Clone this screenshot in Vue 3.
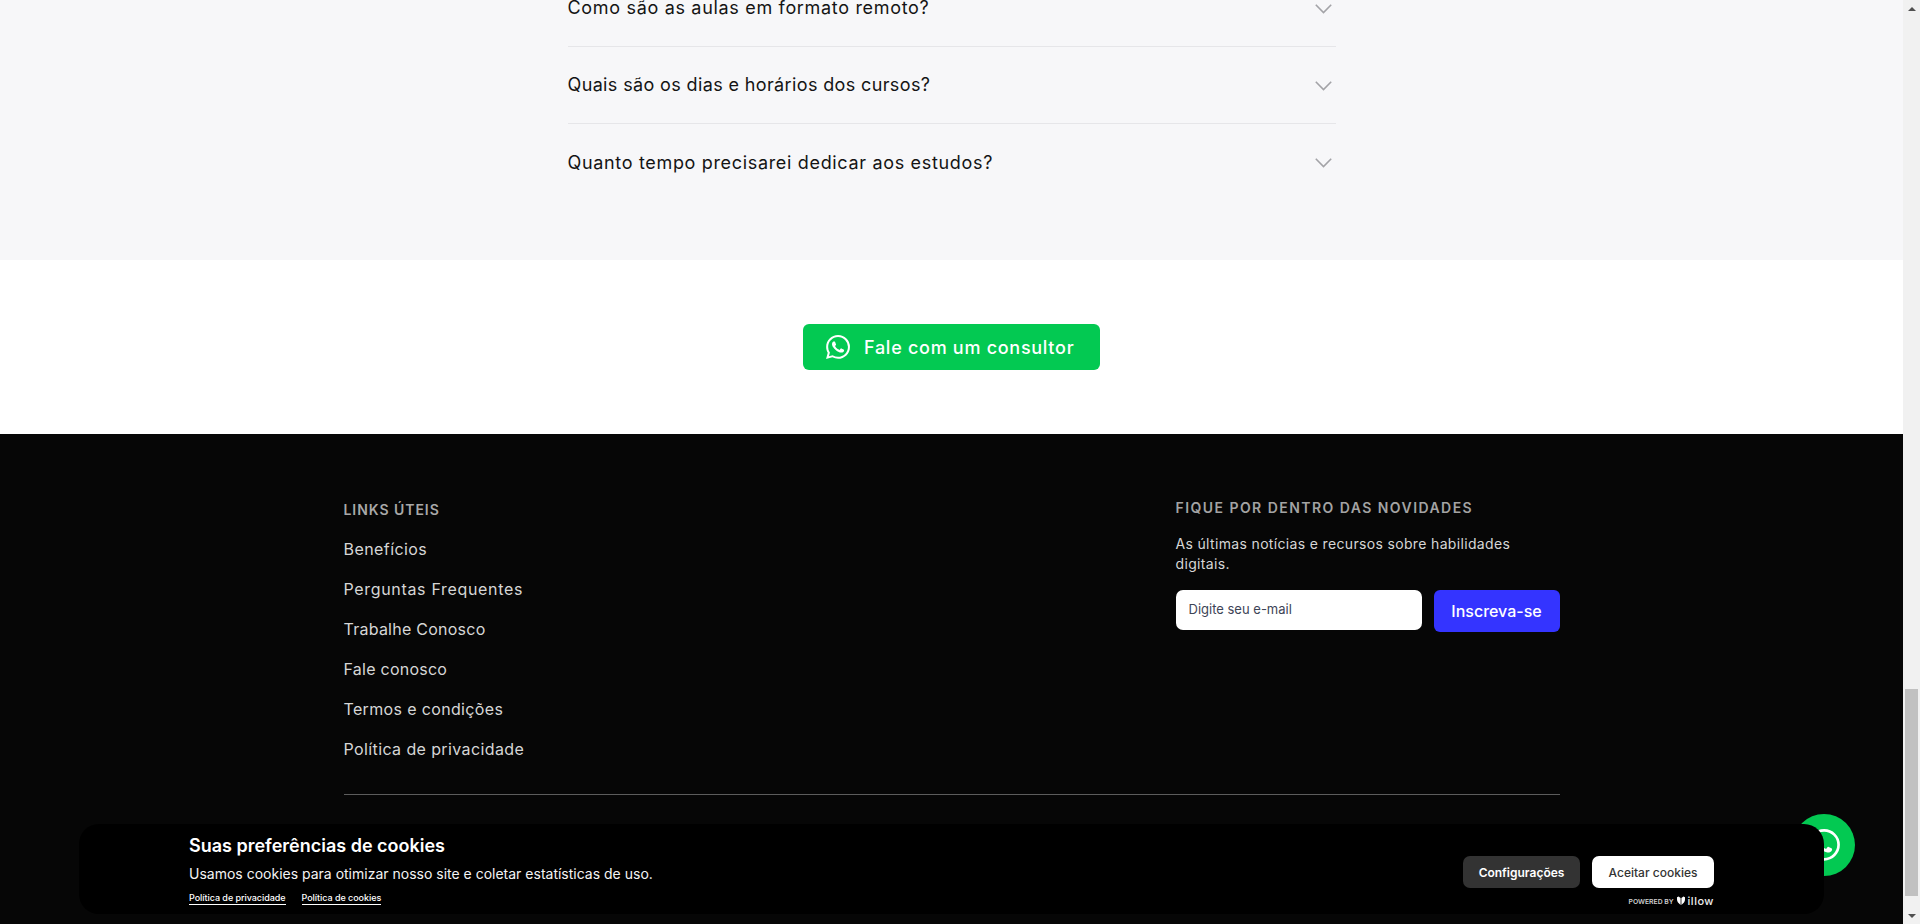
<script setup>
const questions = [
  { text: 'Como são as aulas em formato remoto?', spacing: 0.68 },
  { text: 'Quais são os dias e horários dos cursos?', spacing: 0.37 },
  { text: 'Quanto tempo precisarei dedicar aos estudos?', spacing: 0.67 }
]
const links = [
  { text: 'Benefícios', spacing: 0.43 },
  { text: 'Perguntas Frequentes', spacing: 0.67 },
  { text: 'Trabalhe Conosco', spacing: 0.25 },
  { text: 'Fale conosco', spacing: 0.25 },
  { text: 'Termos e condições', spacing: 0.35 },
  { text: 'Política de privacidade', spacing: 0.39 }
]
const wa = 'M17.472 14.382c-.297-.149-1.758-.867-2.03-.967-.273-.099-.471-.148-.67.15-.197.297-.767.966-.94 1.164-.173.199-.347.223-.644.075-.297-.15-1.255-.463-2.39-1.475-.883-.788-1.48-1.761-1.653-2.059-.173-.297-.018-.458.13-.606.134-.133.298-.347.446-.52.149-.174.198-.298.298-.497.099-.198.05-.371-.025-.52-.075-.149-.669-1.612-.916-2.207-.242-.579-.487-.5-.669-.51-.173-.008-.371-.01-.57-.01-.198 0-.52.074-.792.372-.272.297-1.04 1.016-1.04 2.479 0 1.462 1.065 2.875 1.213 3.074.149.198 2.096 3.2 5.077 4.487.709.306 1.262.489 1.694.625.712.227 1.36.195 1.871.118.571-.085 1.758-.719 2.006-1.413.248-.694.248-1.289.173-1.413-.074-.124-.272-.198-.57-.347m-5.421 7.403h-.004a9.87 9.87 0 01-5.031-1.378l-.361-.214-3.741.982.998-3.648-.235-.374a9.86 9.86 0 01-1.51-5.26c.001-5.45 4.436-9.884 9.888-9.884 2.64 0 5.122 1.03 6.988 2.898a9.825 9.825 0 012.893 6.994c-.003 5.45-4.437 9.884-9.885 9.884m8.413-18.297A11.815 11.815 0 0012.05 0C5.495 0 .16 5.335.157 11.892c0 2.096.547 4.142 1.588 5.945L.057 24l6.305-1.654a11.882 11.882 0 005.683 1.448h.005c6.554 0 11.89-5.335 11.893-11.893a11.821 11.821 0 00-3.48-8.413z'
</script>

<template>
  <div class="page">
    <main class="main">
      <section class="faq">
        <div class="faq-list">
          <div v-for="q in questions" :key="q.text" class="faq-row">
            <span :style="{ letterSpacing: q.spacing + 'px' }">{{ q.text }}</span>
            <svg class="chev" width="17" height="10" viewBox="0 0 17 10" fill="none"><path d="M.8.8 8.5 8.5l7.7-7.7" stroke="#a3a3a7" stroke-width="1.6" /></svg>
          </div>
        </div>
      </section>

      <section class="cta">
        <a class="cta-btn">
          <svg width="24" height="24" viewBox="0 0 24 24" fill="#fff"><path :d="wa" /></svg>
          <span>Fale com um consultor</span>
        </a>
      </section>

      <footer class="footer">
        <div class="footer-inner">
          <div class="cols">
            <nav class="col-links">
              <h4 class="links-title">LINKS ÚTEIS</h4>
              <a v-for="l in links" :key="l.text" class="link" :style="{ letterSpacing: l.spacing + 'px' }">{{ l.text }}</a>
            </nav>
            <div class="col-news">
              <h4 class="news-title">FIQUE POR DENTRO DAS NOVIDADES</h4>
              <p class="news-text">As últimas notícias e recursos sobre habilidades digitais.</p>
              <div class="form">
                <div class="input">Digite seu e-mail</div>
                <button class="sub">Inscreva-se</button>
              </div>
            </div>
          </div>
          <div class="rule"></div>
        </div>
      </footer>
    </main>

    <aside class="scrollbar">
      <div class="arrow"><i class="tri up"></i></div>
      <div class="track"><div class="thumb"></div></div>
      <div class="arrow"><i class="tri down"></i></div>
    </aside>

    <div class="bubble">
      <svg width="32" height="32" viewBox="0 0 24 24" fill="#fff"><path :d="wa" /></svg>
    </div>

    <div class="cookie">
      <div class="cookie-text">
        <h3>Suas preferências de cookies</h3>
        <p>Usamos cookies para otimizar nosso site e coletar estatísticas de uso.</p>
        <div class="cookie-links">
          <a>Política de privacidade</a>
          <a>Política de cookies</a>
        </div>
      </div>
      <div class="cookie-side">
        <div class="cookie-btns">
          <button class="cfg">Configurações</button>
          <button class="ok">Aceitar cookies</button>
        </div>
        <div class="powered">
          <span class="pw">POWERED BY</span>
          <svg width="8" height="10" viewBox="0 0 8 10" fill="#fff"><path d="M0 1.2 1.6.4 3.6 2v7L1 6.4Q0 5 0 3.4zM8 1.2 6.4.4 4.4 2v7L7 6.4Q8 5 8 3.4z" /></svg>
          <span class="il">illow</span>
        </div>
      </div>
    </div>
  </div>
</template>

<style>
html, body { margin: 0; overflow: hidden; }
</style>

<style scoped>
.page {
  position: relative;
  display: flex;
  width: 1920px;
  height: 924px;
  overflow: hidden;
  font-family: Inter, "Liberation Sans", sans-serif;
}
.main {
  flex: 1;
  min-width: 0;
  display: flex;
  flex-direction: column;
}
.faq {
  background: #f7f7f9;
  padding-bottom: 59px;
}
.faq-list {
  width: 768px;
  margin: -30px auto 0;
}
.faq-row {
  height: 77px;
  box-sizing: border-box;
  display: flex;
  align-items: center;
  justify-content: space-between;
  padding: 0 4px 1px 0;
  border-bottom: 1px solid #e6e6e9;
  font-size: 18px;
  color: #141414;
}
.faq-row:last-child { border-bottom: 0; }
.chev { margin-top: 2px; }
.cta {
  background: #fff;
  padding: 64px 0;
  display: flex;
  justify-content: center;
}
.cta-btn {
  width: 297px;
  height: 46px;
  box-sizing: border-box;
  display: flex;
  align-items: center;
  gap: 14px;
  padding-left: 23px;
  background: #03c952;
  border-radius: 6px;
  color: #fff;
  font-size: 18px;
  font-weight: 500;
  letter-spacing: 0.72px;
}
.footer {
  flex: 1;
  background: #060606;
}
.footer-inner {
  width: 1216px;
  margin: 0 auto;
  padding-top: 64px;
}
.cols {
  display: flex;
  justify-content: space-between;
}
.col-links {
  padding-top: 2px;
  display: flex;
  flex-direction: column;
  align-items: flex-start;
}
.links-title {
  margin: 0 0 9px;
  font-size: 14px;
  line-height: 20px;
  font-weight: 600;
  letter-spacing: 0.95px;
  color: #a8a8a8;
}
.link {
  height: 40px;
  line-height: 40px;
  font-size: 16px;
  color: #d6d6d6;
}
.col-news { width: 384px; }
.news-title {
  margin: 0 0 16px;
  font-size: 14px;
  line-height: 20px;
  font-weight: 600;
  letter-spacing: 1.45px;
  color: #a3a3a3;
}
.news-text {
  margin: 0 0 16px;
  font-size: 14px;
  line-height: 20px;
  letter-spacing: 0.34px;
  color: #d6d6d6;
}
.form {
  display: flex;
  align-items: flex-start;
  gap: 12px;
}
.input {
  width: 246px;
  height: 40px;
  box-sizing: border-box;
  padding-left: 13px;
  line-height: 38px;
  background: #fff;
  border-radius: 7px;
  font-size: 13px;
  color: #3d4456;
}
.sub {
  width: 126px;
  height: 42px;
  border: 0;
  padding: 0;
  background: #3434ff;
  border-radius: 6px;
  color: #fff;
  font-family: inherit;
  font-size: 16px;
  font-weight: 500;
  letter-spacing: 0;
}
.rule {
  height: 1px;
  margin-top: 25px;
  background: #5c5c5c;
}
.scrollbar {
  width: 17px;
  flex: none;
  background: #f1f1f1;
  display: flex;
  flex-direction: column;
}
.arrow {
  height: 17px;
  flex: none;
  display: flex;
  align-items: center;
  justify-content: center;
}
.tri {
  width: 0;
  height: 0;
  border-left: 4px solid transparent;
  border-right: 4px solid transparent;
}
.tri.up { border-bottom: 4px solid #505050; }
.tri.down { border-top: 4px solid #505050; }
.track {
  flex: 1;
  padding: 672px 2px 0;
}
.thumb {
  height: 207px;
  background: #c1c1c1;
}
.bubble {
  position: absolute;
  left: 1793px;
  top: 814px;
  width: 62px;
  height: 62px;
  border-radius: 50%;
  background: #03c952;
  display: flex;
  align-items: center;
  justify-content: center;
}
.cookie {
  position: absolute;
  left: 79px;
  top: 824px;
  width: 1745px;
  height: 90px;
  box-sizing: border-box;
  padding: 0 110px;
  background: #000;
  border-radius: 20px;
  display: flex;
  justify-content: space-between;
  color: #fff;
}
.cookie-text { padding-top: 12px; }
.cookie-text h3 {
  margin: 0;
  font-size: 18px;
  line-height: 20px;
  font-weight: 600;
}
.cookie-text p {
  margin: 8px 0 0;
  font-size: 14px;
  line-height: 20px;
  color: #f4f4f4;
}
.cookie-links {
  display: flex;
  gap: 16px;
  margin-top: 8px;
  font-size: 9px;
  font-weight: 500;
  line-height: 12px;
}
.cookie-links a {
  border-bottom: 1px solid #fff;
  letter-spacing: -0.05px;
}
.cookie-side {
  padding-top: 32px;
  display: flex;
  flex-direction: column;
  align-items: flex-end;
}
.cookie-btns {
  display: flex;
  gap: 12px;
}
.cookie-btns button {
  height: 32px;
  border: 0;
  padding: 0;
  border-radius: 7px;
  font-family: inherit;
  font-size: 12px;
}
.cfg {
  width: 117px;
  background: #333;
  color: #fff;
  font-weight: 600;
}
.ok {
  width: 122px;
  background: #fff;
  color: #333;
  font-weight: 500;
}
.powered {
  display: flex;
  align-items: center;
  margin-top: 7px;
  height: 12px;
}
.pw {
  font-size: 6.8px;
  font-weight: 600;
  color: #cfcfcf;
  margin-right: 3px;
}
.il {
  font-size: 11px;
  font-weight: 500;
  margin-left: 3px;
  letter-spacing: 0.5px;
  color: #eee;
}
</style>
